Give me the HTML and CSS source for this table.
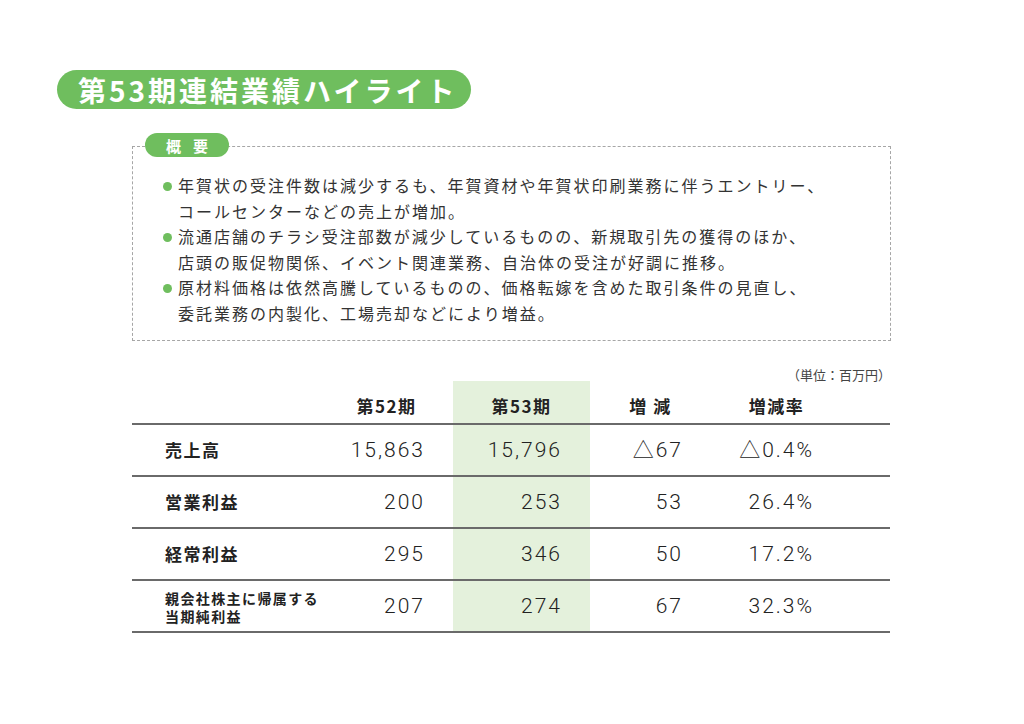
FILE: index.html
```html
<!DOCTYPE html>
<html lang="ja">
<head>
<meta charset="utf-8">
<title>第53期連結業績ハイライト</title>
<link rel="stylesheet" href="styles.css">
</head>
<body>
<div class="page">
  <h1 class="title">第53期連結業績ハイライト</h1>

  <section class="summary">
    <div class="tag"><span>概</span><span>要</span></div>
    <ul class="points">
      <li><span class="dot"></span><p>年賀状の受注件数は減少するも、年賀資材や年賀状印刷業務に伴うエントリー、<br>コールセンターなどの売上が増加。</p></li>
      <li><span class="dot"></span><p>流通店舗のチラシ受注部数が減少しているものの、新規取引先の獲得のほか、<br>店頭の販促物関係、イベント関連業務、自治体の受注が好調に推移。</p></li>
      <li><span class="dot"></span><p>原材料価格は依然高騰しているものの、価格転嫁を含めた取引条件の見直し、<br>委託業務の内製化、工場売却などにより増益。</p></li>
    </ul>
  </section>

  <div class="unit">（単位：百万円）</div>

  <table class="results">
    <colgroup>
      <col class="c-label"><col class="c-num"><col class="c-cur"><col class="c-diff"><col class="c-rate"><col class="c-rest">
    </colgroup>
    <thead>
      <tr>
        <th></th>
        <th>第52期</th>
        <th class="cur">第53期</th>
        <th>増&nbsp;減</th>
        <th>増減率</th>
        <th></th>
      </tr>
    </thead>
    <tbody>
      <tr>
        <td class="label">売上高</td>
        <td class="num">15,863</td>
        <td class="num cur">15,796</td>
        <td class="num">△67</td>
        <td class="num">△0.4%</td>
        <td></td>
      </tr>
      <tr>
        <td class="label">営業利益</td>
        <td class="num">200</td>
        <td class="num cur">253</td>
        <td class="num">53</td>
        <td class="num">26.4%</td>
        <td></td>
      </tr>
      <tr>
        <td class="label">経常利益</td>
        <td class="num">295</td>
        <td class="num cur">346</td>
        <td class="num">50</td>
        <td class="num">17.2%</td>
        <td></td>
      </tr>
      <tr>
        <td class="label small">親会社株主に帰属する<br>当期純利益</td>
        <td class="num">207</td>
        <td class="num cur">274</td>
        <td class="num">67</td>
        <td class="num">32.3%</td>
        <td></td>
      </tr>
    </tbody>
  </table>
</div>
</body>
</html>
```

FILE: styles.css
```css
* { box-sizing: border-box; }

html, body {
  margin: 0;
  padding: 0;
  background: #ffffff;
}

body {
  font-family: "Noto Sans CJK JP", "Noto Sans", sans-serif;
  color: #333333;
}

.page {
  width: 1024px;
  padding-top: 70px;
  display: flex;
  flex-direction: column;
  align-items: flex-start;
}

.title {
  margin: 0 0 0 57px;
  height: 39px;
  padding: 0 14px 0 21px;
  display: flex;
  align-items: center;
  background: #6fbe5e;
  color: #ffffff;
  border-radius: 20px;
  font-size: 28px;
  font-weight: 700;
  letter-spacing: 3px;
  line-height: 1;
  white-space: nowrap;
}

.summary {
  position: relative;
  margin: 37px 0 0 132px;
  width: 759px;
  border: 1px dashed #a6a6a6;
  padding: 26px 0 13px 30px;
}

.tag {
  position: absolute;
  top: -14px;
  left: 12px;
  width: 84px;
  height: 24px;
  border-radius: 12px;
  background: #6fbe5e;
  color: #ffffff;
  font-size: 15px;
  font-weight: 700;
  display: flex;
  align-items: center;
  justify-content: center;
  gap: 12px;
  line-height: 1;
}

.points {
  list-style: none;
  margin: 0;
  padding: 0;
}

.points li {
  display: flex;
  align-items: flex-start;
}

.dot {
  flex: none;
  width: 9px;
  height: 9px;
  border-radius: 50%;
  background: #6fbe5e;
  margin: 9px 6px 0 0;
}

.points p {
  margin: 0;
  font-size: 16px;
  line-height: 25.6px;
  letter-spacing: 2px;
  white-space: nowrap;
  color: #333333;
}

.unit {
  margin: 25px 0 0 0;
  width: 891px;
  text-align: right;
  font-size: 13px;
  line-height: 17px;
  color: #444444;
}

.results {
  margin: -2px 0 0 132px;
  width: 758px;
  border-collapse: collapse;
  table-layout: fixed;
  color: #222222;
}

.c-label { width: 188px; }
.c-num { width: 133px; }
.c-cur { width: 137px; }
.c-diff { width: 121px; }
.c-rate { width: 131px; }
.c-rest { width: 48px; }

.results thead th {
  height: 43px;
  padding: 0 0 7px 0;
  vertical-align: bottom;
  text-align: center;
  font-size: 17px;
  font-weight: 700;
  letter-spacing: 1.5px;
  line-height: 20px;
  border-bottom: 2px solid #6a6a6a;
}

.results tbody td {
  height: 52px;
  padding: 0;
  vertical-align: middle;
  border-bottom: 2px solid #6a6a6a;
}

.results .cur {
  background: #e4f1dc;
}

.label {
  padding-left: 33px !important;
  font-size: 17px;
  font-weight: 700;
  letter-spacing: 1.5px;
  line-height: 20px;
}

.label.small {
  font-size: 14px;
  letter-spacing: 1.4px;
  line-height: 18px;
  padding-top: 2px !important;
}

.num {
  padding-right: 28px !important;
  text-align: right;
  font-family: Roboto, "Noto Sans CJK JP", sans-serif;
  font-weight: 300;
  font-size: 21px;
  letter-spacing: 2px;
  line-height: 24px;
  color: #222222;
}
```
